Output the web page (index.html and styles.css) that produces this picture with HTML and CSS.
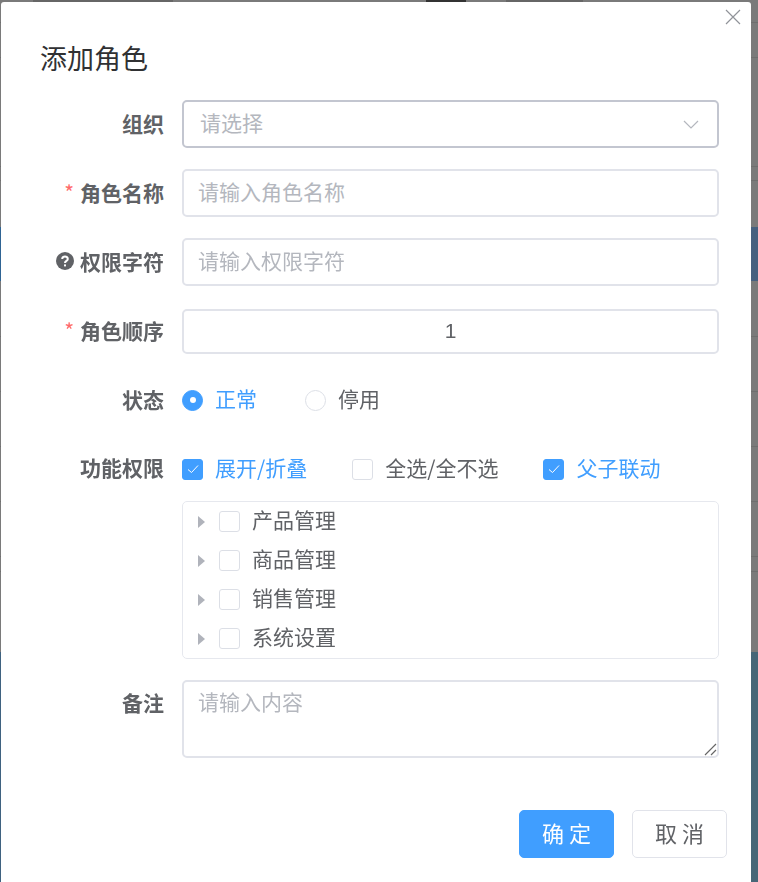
FILE: index.html
```html
<!DOCTYPE html>
<html lang="zh-CN">
<head>
  <meta charset="UTF-8" />
  <meta name="viewport" content="width=device-width, initial-scale=1.0" />
  <title>添加角色</title>
  <link rel="stylesheet" href="styles.css">
</head>
<body>
  <div class="backdrop">
    <div class="bg-frag frag-1"></div>
    <div class="bg-frag frag-2"></div>
    <div class="bg-frag frag-3"></div>
    <div class="bg-band band-blue"></div>
    <div class="bg-band band-teal"></div>
    <div class="bg-line line-1"></div>
    <div class="bg-line line-2"></div>
    <div class="bg-line line-3"></div>
    <div class="bg-line line-4"></div>
    <div class="bg-line line-5"></div>
    <div class="bg-line line-6"></div>
    <div class="bg-line line-7"></div>
    <div class="bg-line line-8"></div>
    <div class="bg-line line-9"></div>
    <div class="bg-line line-10"></div>
  </div>

  <div class="dialog">
    <button class="close-btn" aria-label="关闭">
      <svg width="16" height="16" viewBox="0 0 16 16"><path d="M1 1 L15 15 M15 1 L1 15" /></svg>
    </button>
    <h2 class="dialog-title">添加角色</h2>

    <form class="form">
      <div class="form-row row-org">
        <label class="form-label">组织</label>
        <div class="input select">
          <span class="placeholder">请选择</span>
          <svg class="arrow" width="16" height="9" viewBox="0 0 16 9"><path d="M1 1 L8 8 L15 1" /></svg>
        </div>
      </div>

      <div class="form-row row-name">
        <label class="form-label"><span class="star">*</span>角色名称</label>
        <div class="input"><span class="placeholder">请输入角色名称</span></div>
      </div>

      <div class="form-row row-key">
        <label class="form-label">
          <svg class="help" width="18" height="18" viewBox="0 0 18 18">
            <circle cx="9" cy="9" r="9" />
            <path d="M6.2 7 C6.2 3.6 11.8 3.6 11.8 7 C11.8 9 9 8.8 9 11" />
            <rect x="8" y="12.4" width="2" height="2" />
          </svg>权限字符
        </label>
        <div class="input"><span class="placeholder">请输入权限字符</span></div>
      </div>

      <div class="form-row row-sort">
        <label class="form-label"><span class="star">*</span>角色顺序</label>
        <div class="input number">1</div>
      </div>

      <div class="form-row row-status">
        <label class="form-label">状态</label>
        <div class="options">
          <span class="radio checked"><i class="radio-dot"></i><span class="txt">正常</span></span>
          <span class="radio"><i class="radio-dot"></i><span class="txt">停用</span></span>
        </div>
      </div>

      <div class="form-row row-perm">
        <label class="form-label">功能权限</label>
        <div class="perm-body">
          <div class="options">
            <span class="check checked"><i class="box"><svg width="14" height="14" viewBox="0 0 14 14"><path d="M2 7.5 L5.5 10.5 L12 3.5" /></svg></i><span class="txt">展开/折叠</span></span>
            <span class="check"><i class="box"></i><span class="txt">全选/全不选</span></span>
            <span class="check checked"><i class="box"><svg width="14" height="14" viewBox="0 0 14 14"><path d="M2 7.5 L5.5 10.5 L12 3.5" /></svg></i><span class="txt">父子联动</span></span>
          </div>
          <div class="tree">
            <div class="tree-node"><i class="caret"></i><i class="box"></i><span class="tree-label">产品管理</span></div>
            <div class="tree-node"><i class="caret"></i><i class="box"></i><span class="tree-label">商品管理</span></div>
            <div class="tree-node"><i class="caret"></i><i class="box"></i><span class="tree-label">销售管理</span></div>
            <div class="tree-node"><i class="caret"></i><i class="box"></i><span class="tree-label">系统设置</span></div>
          </div>
        </div>
      </div>

      <div class="form-row row-remark">
        <label class="form-label">备注</label>
        <div class="input textarea">
          <span class="placeholder">请输入内容</span>
          <svg class="grip" width="13" height="13" viewBox="0 0 13 13"><path d="M1 12 L12 1 M7 12 L12 7" /></svg>
        </div>
      </div>
    </form>

    <div class="dialog-footer">
      <button class="btn btn-primary">确 定</button>
      <button class="btn">取 消</button>
    </div>
  </div>
</body>
</html>
```

FILE: styles.css
```css
html, body {
  margin: 0;
  padding: 0;
  height: 100%;
  overflow: hidden;
  font-family: "Noto Sans CJK SC", "Liberation Sans", sans-serif;
}
.backdrop {
  position: fixed;
  inset: 0;
  background: #7a7a7a;
}
.bg-frag {
  position: absolute;
  top: 0;
  height: 2px;
}
.frag-1 { left: 33px; width: 140px; background: #666; }
.frag-2 { left: 426px; width: 40px; background: #333; }
.frag-3 { left: 506px; width: 77px; background: #666; }
.bg-band {
  position: absolute;
  left: 0;
  right: 0;
}
.band-blue {
  top: 227px;
  height: 54px;
  background: linear-gradient(to right, #2f6494, #46607f);
}
.band-teal {
  top: 652px;
  bottom: 0;
  background: linear-gradient(to right, #3f6280, #466677);
}
.bg-line {
  position: absolute;
  left: 0;
  right: 0;
  height: 1px;
  background: #6e6e6e;
}
.line-1 { top: 22px; }
.line-2 { top: 57px; }
.line-3 { top: 166px; }
.line-4 { top: 180px; }
.line-5 { top: 336px; }
.line-6 { top: 391px; }
.line-7 { top: 446px; }
.line-8 { top: 501px; }
.line-9 { top: 556px; }
.line-10 { top: 571px; }
.dialog {
  position: absolute;
  top: 2px;
  left: 1px;
  width: 750px;
  height: 884px;
  background: #fff;
  border-radius: 3px;
}
.close-btn {
  position: absolute;
  top: 7px;
  right: 10px;
  width: 16px;
  height: 16px;
  padding: 0;
  border: none;
  background: none;
  line-height: 0;
}
.close-btn path {
  fill: none;
  stroke: #909399;
  stroke-width: 1.2;
}
.dialog-title {
  margin: 0;
  padding: 39px 0 2px 39px;
  height: 33px;
  font-size: 27px;
  line-height: 33px;
  font-weight: 400;
  color: #303133;
}
.form {
  padding: 24px 32px 0 0;
}
.form-row {
  display: flex;
  align-items: flex-start;
}
.form-label {
  display: flex;
  align-items: center;
  justify-content: flex-end;
  box-sizing: border-box;
  width: 163px;
  margin-right: 18px;
  flex-shrink: 0;
  height: 48px;
  padding-bottom: 2px;
  font-size: 21px;
  font-weight: 700;
  color: #606266;
}
.row-name, .row-key { margin-top: 21px; }
.row-sort { margin-top: 23px; }
.row-sort .form-label { height: 45px; padding-bottom: 4px; }
.row-status { margin-top: 23px; }
.row-status .form-label { height: 46px; }
.row-perm { margin-top: 23px; }
.row-perm .form-label { height: 46px; padding-bottom: 4px; }
.row-remark { margin-top: 21px; }
.row-remark .form-label { height: 46px; }

.star {
  margin-right: 6px;
  color: #ff6b6b;
  font-size: 21px;
  font-weight: 400;
}
.help { margin-right: 6px; }
.help circle { fill: #606266; }
.help path { fill: none; stroke: #fff; stroke-width: 2; }
.help rect { fill: #fff; }

.input {
  position: relative;
  display: flex;
  align-items: center;
  flex: 1;
  box-sizing: border-box;
  height: 48px;
  padding: 0 14px;
  border: 2px solid #e1e3ea;
  border-radius: 5px;
  font-size: 21px;
  color: #606266;
}
.placeholder {
  margin-bottom: 4px;
  color: #b4b7be;
}
.select {
  justify-content: space-between;
  padding: 0 18px 0 16px;
  border-color: #c3c6d0;
}
.arrow path {
  fill: none;
  stroke: #b4b7be;
  stroke-width: 1.2;
}
.number {
  justify-content: center;
  height: 45px;
  padding-bottom: 2px;
  font-family: "Liberation Sans", sans-serif;
  font-size: 21px;
}
.textarea {
  align-items: flex-start;
  height: 78px;
  padding-top: 4px;
}
.grip {
  position: absolute;
  right: 0;
  bottom: 0;
}
.grip path {
  fill: none;
  stroke: #666;
  stroke-width: 1.2;
}

.options {
  display: flex;
  align-items: center;
  font-size: 21px;
  color: #606266;
}
.row-status .options, .perm-body .options { height: 46px; }
.txt { margin-bottom: 4px; }
.radio {
  display: flex;
  align-items: center;
  margin-right: 48px;
}
.radio-dot {
  display: flex;
  align-items: center;
  justify-content: center;
  box-sizing: border-box;
  width: 21px;
  height: 21px;
  margin-right: 12px;
  border: 1.5px solid #dcdfe6;
  border-radius: 50%;
}
.radio.checked { color: #409eff; }
.radio.checked .radio-dot {
  background: #409eff;
  border-color: #409eff;
}
.radio.checked .radio-dot::after {
  content: "";
  width: 6px;
  height: 6px;
  border-radius: 50%;
  background: #fff;
}
.perm-body { flex: 1; }
.check {
  display: flex;
  align-items: center;
  margin-right: 45px;
}
.box {
  display: flex;
  align-items: center;
  justify-content: center;
  flex-shrink: 0;
  box-sizing: border-box;
  width: 21px;
  height: 21px;
  margin-right: 12px;
  border: 1.5px solid #dcdfe6;
  border-radius: 3px;
  background: #fff;
}
.box path {
  fill: none;
  stroke: #fff;
  stroke-width: 1;
}
.check.checked { color: #409eff; }
.check.checked .box {
  background: #409eff;
  border-color: #409eff;
}
.tree {
  box-sizing: border-box;
  height: 158px;
  margin-top: 9px;
  border: 1.5px solid #e6e8ee;
  border-radius: 5px;
}
.tree-node {
  display: flex;
  align-items: center;
  height: 39px;
  font-size: 21px;
  color: #606266;
}
.tree-label { margin-bottom: 6px; }
.caret {
  width: 0;
  height: 0;
  margin: 0 14px 0 15px;
  border-style: solid;
  border-width: 6px 0 6px 7px;
  border-color: transparent transparent transparent #b0b3bb;
}
.dialog-footer {
  display: flex;
  justify-content: flex-end;
  gap: 18px;
  padding: 52px 24px 0 0;
}
.btn {
  box-sizing: border-box;
  width: 95px;
  height: 48px;
  padding: 0 0 4px;
  border: 1.5px solid #e1e3ea;
  border-radius: 5px;
  background: #fff;
  font-family: inherit;
  font-size: 22px;
  color: #606266;
}
.btn-primary {
  border-color: #409eff;
  background: #409eff;
  color: #fff;
}
```
